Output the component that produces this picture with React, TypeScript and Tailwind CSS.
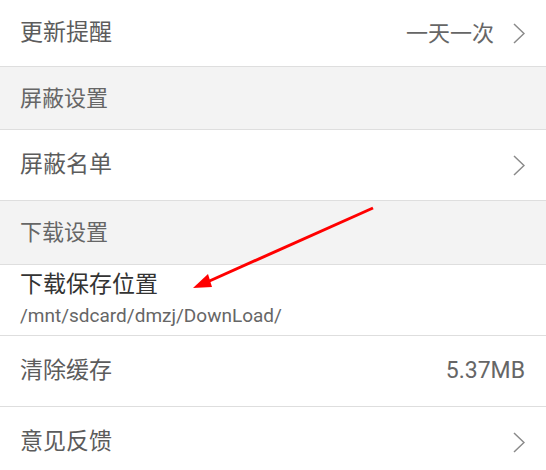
const font = {
  fontFamily: 'Roboto, "Noto Sans CJK SC", sans-serif',
};

const Chevron = () => (
  <svg width="12" height="21" viewBox="0 0 12 21" className="shrink-0">
    <path d="M1 1 L11 10.5 L1 20" fill="none" stroke="#8a8a8a" strokeWidth="1.5" />
  </svg>
);

const Row = ({
  title,
  value,
  arrow,
}: {
  title: string;
  value?: string;
  arrow?: boolean;
}) => (
  <div className="flex h-[71px] items-center justify-between border-b border-[#dedede] bg-white pl-5 pr-[21px]">
    <span className="text-[23px] text-[#5c5c5c]">{title}</span>
    <div className="flex items-center gap-[19px]">
      {value && <span className="text-[22px] text-[#666]">{value}</span>}
      {arrow && <Chevron />}
    </div>
  </div>
);

const Header = ({ title, h }: { title: string; h: string }) => (
  <div className={`flex ${h} items-center border-b border-[#dedede] bg-[#f3f3f3] pl-5`}>
    <span className="text-[22px] text-[#666]">{title}</span>
  </div>
);

export default function App() {
  return (
    <div className="relative h-[470px] w-[546px] overflow-hidden bg-white" style={font}>
      <div className="flex h-[67px] items-center justify-between border-b border-[#dedede] bg-white pl-5 pr-[21px]">
        <span className="text-[23px] text-[#5c5c5c]">更新提醒</span>
        <div className="flex items-center gap-[19px]">
          <span className="text-[22px] text-[#666]">一天一次</span>
          <Chevron />
        </div>
      </div>
      <Header title="屏蔽设置" h="h-[63px]" />
      <Row title="屏蔽名单" arrow />
      <Header title="下载设置" h="h-[64px]" />
      <div className="flex h-[71px] flex-col justify-center gap-[6px] border-b border-[#dedede] bg-white pl-5">
        <span className="text-[23px] leading-[26px] text-[#333]">下载保存位置</span>
        <span className="text-[19px] leading-[24px] text-[#666]">/mnt/sdcard/dmzj/DownLoad/</span>
      </div>
      <div className="flex h-[71px] items-center justify-between border-b border-[#dedede] bg-white pl-5 pr-[21px]">
        <span className="text-[23px] text-[#5c5c5c]">清除缓存</span>
        <span className="text-[23px] text-[#666]">5.37MB</span>
      </div>
      <Row title="意见反馈" arrow />

      {/* red annotation arrow */}
      <svg className="pointer-events-none absolute left-0 top-0" width="546" height="470">
        <line x1="373" y1="208" x2="205" y2="283" stroke="#ff0000" strokeWidth="3" />
        <polygon points="193,288 208,274 212,287" fill="#ff0000" />
      </svg>
    </div>
  );
}
